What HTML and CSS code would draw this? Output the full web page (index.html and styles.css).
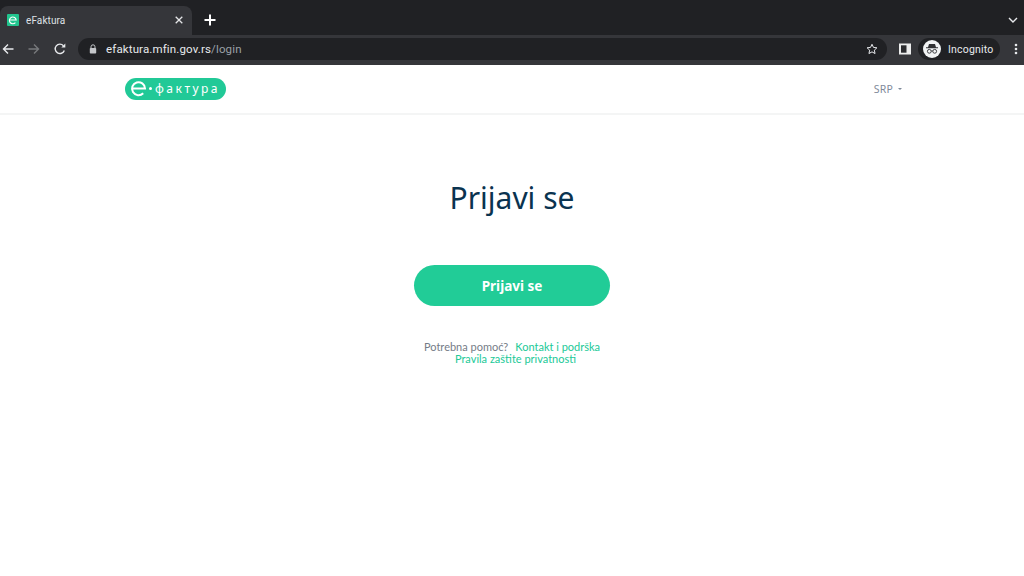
FILE: index.html
```html
<!DOCTYPE html>
<html lang="sr">
<head>
<meta charset="utf-8">
<title>eFaktura</title>
<link rel="stylesheet" href="styles.css">
</head>
<body>
<div class="browser">
  <div class="tabstrip">
    <div class="tab">
      <span class="favicon"><svg width="10" height="10" viewBox="0 0 10 10"><path d="M2 5h6.200A3.400 3.400 0 1 0 7.400 7.600" fill="none" stroke="#fff" stroke-width="1.100"/></svg></span>
      <span class="tab-title">eFaktura</span>
      <svg class="tab-close" width="8" height="8" viewBox="0 0 8 8"><path d="M.7.7l6.600 6.600M7.300.7L.7 7.300" stroke="#e4e5e7" stroke-width="1.300"/></svg>
    </div>
    <svg class="newtab" width="12" height="12" viewBox="0 0 12 12"><path d="M6 .5v11M.5 6h11" stroke="#fff" stroke-width="2"/></svg>
    <svg class="tabmenu" width="10" height="6" viewBox="0 0 10 6"><path d="M1 1l4 4 4-4" fill="none" stroke="#e8eaed" stroke-width="1.400"/></svg>
  </div>
  <div class="toolbar">
    <svg class="nav nav-back" width="12" height="12" viewBox="0 0 12 12"><path d="M11.500 6H1.500M6 1.500L1.500 6 6 10.500" fill="none" stroke="#e8eaed" stroke-width="1.400"/></svg>
    <svg class="nav nav-forward" width="12" height="12" viewBox="0 0 12 12"><path d="M.5 6h10M6 1.500L10.500 6 6 10.500" fill="none" stroke="#77797c" stroke-width="1.400"/></svg>
    <svg class="nav nav-reload" width="12" height="12" viewBox="0 0 12 12"><path d="M10.300 7.500A4.700 4.700 0 1 1 9.400 2.700" fill="none" stroke="#e8eaed" stroke-width="1.400"/><path d="M11.300.6v4h-4z" fill="#e8eaed"/></svg>
    <div class="omnibox">
      <svg class="lock" width="8" height="10" viewBox="0 0 8 10"><path d="M2 4V2.800a2 2 0 0 1 4 0V4" fill="none" stroke="#c4c6c9" stroke-width="1"/><rect x=".8" y="4" width="6.400" height="5.500" rx=".8" fill="#c4c6c9"/></svg>
      <span class="url">efaktura.mfin.gov.rs<span class="url-path">/login</span></span>
      <svg class="star" width="12" height="12" viewBox="0 0 24 24"><path d="M12 2.500l2.900 6.300 6.900.8-5.100 4.700 1.400 6.800L12 17.700l-6.100 3.400 1.400-6.800L2.200 9.600l6.900-.8z" fill="none" stroke="#e8eaed" stroke-width="2"/></svg>
    </div>
    <svg class="sidepanel" width="12" height="12" viewBox="0 0 12 12"><path d="M0 .5h12v11H0z" fill="#eceded"/><path d="M2 2.300h5.500v7.400H2z" fill="#2a2b2e"/></svg>
    <div class="profile">
      <span class="avatar"><svg width="18" height="18" viewBox="0 0 18 18"><circle cx="9" cy="9" r="9" fill="#f1f3f4"/><path d="M6 4h6l1 3.300h2v1H3v-1h2z" fill="#303134"/><circle cx="6.300" cy="11.300" r="1.900" fill="none" stroke="#303134" stroke-width=".9"/><circle cx="11.700" cy="11.300" r="1.900" fill="none" stroke="#303134" stroke-width=".9"/><path d="M8.200 11h1.600" stroke="#303134" stroke-width=".9"/></svg></span>
      <span class="profile-name">Incognito</span>
    </div>
    <svg class="kebab" width="4" height="12" viewBox="0 0 4 12"><circle cx="2" cy="2" r="1.300" fill="#e8eaed"/><circle cx="2" cy="6" r="1.300" fill="#e8eaed"/><circle cx="2" cy="10" r="1.300" fill="#e8eaed"/></svg>
  </div>
</div>
<header class="site-header">
  <div class="logo">
    <svg class="logo-e" width="17" height="17" viewBox="0 0 17 17"><path d="M3 8.500h12A6.500 6.500 0 1 0 13.200 13.200" fill="none" stroke="#fff" stroke-width="2"/></svg>
    <span class="logo-dot"></span>
    <span class="logo-text">фактура</span>
  </div>
  <div class="lang">SRP<span class="caret"></span></div>
</header>
<main class="login">
  <h1 class="login-title">Prijavi se</h1>
  <a class="login-button" href="#">Prijavi se</a>
  <p class="help">Potrebna pomoć?<a class="help-link first" href="#">Kontakt i podrška</a></p>
  <p class="help"><a class="help-link" href="#">Pravila zaštite privatnosti</a></p>
</main>
</body>
</html>
```
FILE: styles.css
```css
* { box-sizing: border-box; }
html, body { margin: 0; height: 100%; }
body { background: #fff; font-family: "Noto Sans", "Open Sans", sans-serif; overflow: hidden; }

.browser { font-family: Roboto, "Liberation Sans", sans-serif; }
.tabstrip { height: 35px; background: #202124; display: flex; align-items: flex-end; }
.tab { width: 192px; height: 29px; background: #35363a; border-radius: 8px 8px 0 0; display: flex; align-items: center; padding: 0 6px 1px 7px; }
.favicon { width: 12px; height: 12px; background: #21c58e; border-radius: 1px; display: flex; align-items: center; justify-content: center; }
.tab-title { margin-left: 7px; flex: 1; color: #dfe1e5; font-size: 10px; letter-spacing: .1px; }
.tab-close { margin-right: 3px; }
.newtab { margin: 0 0 9px 12px; }
.tabmenu { margin: 0 6px 12px auto; }

.toolbar { height: 30px; background: #35363a; display: flex; align-items: center; padding-bottom: 2px; }
.nav { flex: none; }
.nav-back { margin-left: 2px; }
.nav-forward { margin-left: 14px; }
.nav-reload { margin-left: 14px; }
.omnibox { margin-left: 12px; width: 809px; height: 22px; border-radius: 11px; background: #202124; display: flex; align-items: center; padding: 0 9px 0 11px; }
.url { margin-left: 9px; flex: 1; color: #e8eaed; font-size: 11.500px; letter-spacing: .14px; }
.url-path { color: #9aa0a6; }
.sidepanel { margin-left: 12px; }
.profile { margin-left: 7px; height: 22px; width: 82px; border-radius: 11px; background: #202124; display: flex; align-items: center; padding-left: 5px; }
.avatar { width: 18px; height: 18px; display: flex; }
.profile-name { margin-left: 7px; color: #e8eaed; font-size: 10.500px; letter-spacing: .2px; }
.kebab { margin-left: 14px; }

.site-header { height: 50px; background: #fff; border-bottom: 2px solid #f4f5f5; display: flex; align-items: center; justify-content: space-between; padding: 0 122px 1px 125px; }
.logo { width: 101px; height: 22px; border-radius: 11px; background: #21c997; display: flex; align-items: center; padding-left: 5px; color: #fff; }
.logo-e { flex: none; }
.logo-dot { width: 3px; height: 3px; margin-left: 2px; border-radius: 50%; background: #fff; }
.logo-text { margin-left: 3px; font-size: 12px; letter-spacing: 2.500px; }
.lang { color: #7f8a9a; font-size: 10.500px; letter-spacing: .2px; display: flex; align-items: center; }
.caret { margin-left: 5px; border: 2px solid transparent; border-top-color: #7f8a9a; border-bottom: 0; }

.login { display: flex; flex-direction: column; align-items: center; padding-top: 61px; }
.login-title { margin: 0; color: #0a3350; font-size: 30px; line-height: 44px; font-weight: 400; }
.login-button { margin-top: 45px; width: 196px; height: 41px; border-radius: 21px; background: #21cc97; color: #fff; font-size: 13.500px; font-weight: 700; display: flex; align-items: center; justify-content: center; text-decoration: none; }
.help { margin: 0; color: #757c87; font-family: Lato, "Noto Sans", sans-serif; font-size: 11px; line-height: 12px; }
.login-button + .help { margin-top: 35px; }
.help-link { color: #21c997; text-decoration: none; }
.help-link.first { margin-left: 7px; }
.help + .help { padding-left: 7px; }
```
